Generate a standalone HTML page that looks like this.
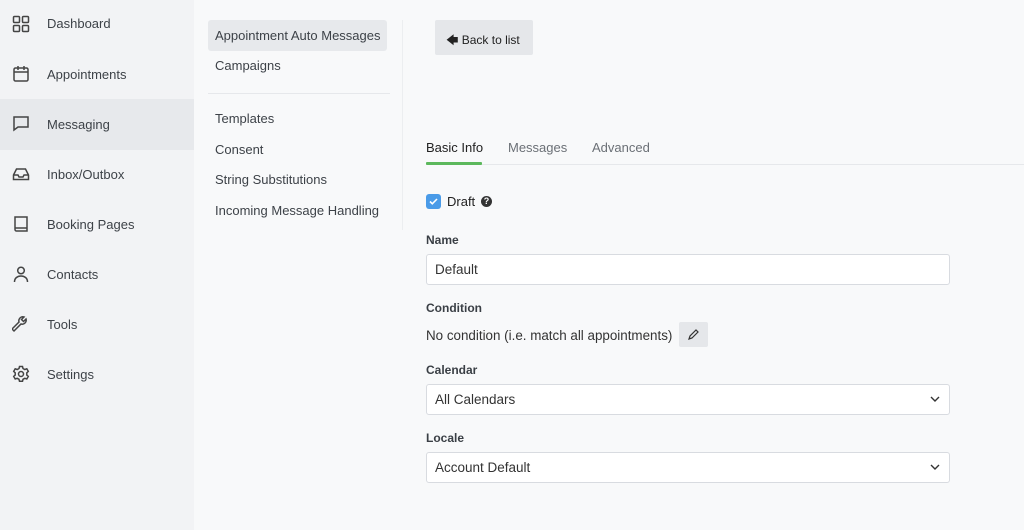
<!DOCTYPE html>
<html><head><style>
*{box-sizing:border-box;margin:0;padding:0}
body{width:1024px;height:530px;background:#f8f9fa;font-family:"Liberation Sans",sans-serif;color:#3a3f45;position:relative;overflow:hidden}
.side{position:absolute;left:0;top:0;width:194px;height:530px;background:#f2f3f5}
.it{position:absolute;left:0;width:194px;height:50px;font-size:13px;color:#3d4248}
.it span{position:absolute;left:47px;top:17px}
.it svg{position:absolute;left:12px;top:15px}
.act{background:#e7e9ec}
.a{position:absolute;font-size:13px;color:#3d4248}
.lbl{position:absolute;left:426px;font-size:12px;font-weight:bold;color:#3a3f45}
.inp{position:absolute;left:426px;width:524px;height:31px;background:#fff;border:1px solid #d8dbe0;border-radius:3px;font-size:13.5px;padding:7px 8px;color:#333}
.chev{position:absolute;right:9px;top:11px}
</style></head><body>
<div class="side">
<div class="it" style="top:0"><svg width="18" height="18" viewBox="0 0 18 18" fill="none" stroke="#444" stroke-width="1.5"><rect x="1.5" y="1.5" width="6" height="6" rx="1"/><rect x="10.5" y="1.5" width="6" height="6" rx="1"/><rect x="1.5" y="10.5" width="6" height="6" rx="1"/><rect x="10.5" y="10.5" width="6" height="6" rx="1"/></svg><span style="top:16px">Dashboard</span></div>
<div class="it" style="top:50px"><svg width="18" height="18" viewBox="0 0 18 18" fill="none" stroke="#444" stroke-width="1.5"><rect x="2" y="3" width="14" height="13" rx="1.5"/><path d="M2 7h14M6 1v4M12 1v4"/></svg><span>Appointments</span></div>
<div class="it act" style="top:99px;height:51px"><svg width="18" height="18" viewBox="0 0 18 18" fill="none" stroke="#444" stroke-width="1.5"><path d="M2 3h14v10H6l-4 3z"/></svg><span style="top:18px">Messaging</span></div>
<div class="it" style="top:150px"><svg width="18" height="18" viewBox="0 0 18 18" fill="none" stroke="#444" stroke-width="1.5"><path d="M1.5 10l3-6h9l3 6v4.5h-15zM1.5 10h4.5l1 2h4l1-2h4.5"/></svg><span>Inbox/Outbox</span></div>
<div class="it" style="top:200px"><svg width="18" height="18" viewBox="0 0 18 18" fill="none" stroke="#444" stroke-width="1.5"><path d="M3 2h12v14H4.5A1.5 1.5 0 0 1 3 14.5zM3 13h12"/></svg><span>Booking Pages</span></div>
<div class="it" style="top:250px"><svg width="18" height="18" viewBox="0 0 18 18" fill="none" stroke="#444" stroke-width="1.5"><circle cx="9" cy="5.5" r="3.3"/><path d="M2.5 17c0-4 3-6 6.5-6s6.5 2 6.5 6"/></svg><span>Contacts</span></div>
<div class="it" style="top:300px"><svg width="18" height="18" viewBox="0 0 18 18" fill="none" stroke="#444" stroke-width="1.5"><path d="M2 16l7-7a4 4 0 0 0 5-5l-2.5 2.5-2-2L12 2a4 4 0 0 0-5 5l-7 7z"/></svg><span>Tools</span></div>
<div class="it" style="top:350px"><svg width="18" height="18" viewBox="0 0 18 18" fill="none" stroke="#444" stroke-width="1.5"><circle cx="9" cy="9" r="2.5"/><path d="M7.5 1.5h3l.5 2 1.8 1 2-.7 1.5 2.6-1.5 1.4v2.2l1.5 1.4-1.5 2.6-2-.7-1.8 1-.5 2h-3l-.5-2-1.8-1-2 .7L1.7 11.4l1.5-1.4V7.8L1.7 6.4l1.5-2.6 2 .7 1.8-1z"/></svg><span>Settings</span></div>
</div>
<div style="position:absolute;left:208px;top:20px;width:179px;height:31px;background:#e7e9ec;border-radius:3px"></div>
<div class="a" style="left:215px;top:28px">Appointment Auto Messages</div>
<div class="a" style="left:215px;top:58px">Campaigns</div>
<div style="position:absolute;left:208px;top:93px;width:182px;height:1px;background:#e6e8eb"></div>
<div class="a" style="left:215px;top:111px">Templates</div>
<div class="a" style="left:215px;top:142px">Consent</div>
<div class="a" style="left:215px;top:172px">String Substitutions</div>
<div class="a" style="left:215px;top:203px">Incoming Message Handling</div>
<div style="position:absolute;left:402px;top:20px;width:1px;height:210px;background:#eceef0"></div>
<div style="position:absolute;left:435px;top:20px;width:98px;height:35px;background:#e5e7ea;border-radius:2px;font-size:12px;color:#222;padding:11px 0 0 11px">&#129092; Back to list</div>
<div style="position:absolute;left:426px;top:164px;width:598px;height:1px;background:#e6e8eb"></div>
<div style="position:absolute;left:426px;top:162px;width:56px;height:3px;background:#5cb85c;border-radius:1px"></div>
<div class="a" style="left:426px;top:140px;color:#222">Basic Info</div>
<div class="a" style="left:508px;top:140px;color:#6b7076">Messages</div>
<div class="a" style="left:592px;top:140px;color:#6b7076">Advanced</div>
<div style="position:absolute;left:426px;top:194px;width:15px;height:15px;background:#4a9be8;border-radius:3px"><svg width="15" height="15" viewBox="0 0 15 15"><path d="M4 7.5l2.3 2.3L11 5" fill="none" stroke="#fff" stroke-width="1.6"/></svg></div>
<div class="a" style="left:447px;top:194px;color:#222">Draft</div>
<div style="position:absolute;left:481px;top:196px;width:11px;height:11px;border-radius:50%;background:#333;color:#fff;font-size:9px;font-weight:bold;text-align:center;line-height:11px">?</div>
<div class="lbl" style="top:233px">Name</div>
<div class="inp" style="top:254px">Default</div>
<div class="lbl" style="top:301px">Condition</div>
<div class="a" style="left:426px;top:328px;color:#333;font-size:13.4px">No condition (i.e. match all appointments)</div>
<div style="position:absolute;left:679px;top:322px;width:29px;height:25px;background:#e5e7ea;border-radius:2px"><svg width="29" height="25" viewBox="0 0 29 25"><path d="M10 17l1-3 6-6 2 2-6 6z" fill="none" stroke="#333" stroke-width="1.2"/></svg></div>
<div class="lbl" style="top:363px">Calendar</div>
<div class="inp" style="top:384px;height:31px">All Calendars<svg class="chev" width="10" height="7" viewBox="0 0 10 7"><path d="M1 1l4 4 4-4" fill="none" stroke="#333" stroke-width="1.4"/></svg></div>
<div class="lbl" style="top:431px">Locale</div>
<div class="inp" style="top:452px;height:31px">Account Default<svg class="chev" width="10" height="7" viewBox="0 0 10 7"><path d="M1 1l4 4 4-4" fill="none" stroke="#333" stroke-width="1.4"/></svg></div>
</body></html>
